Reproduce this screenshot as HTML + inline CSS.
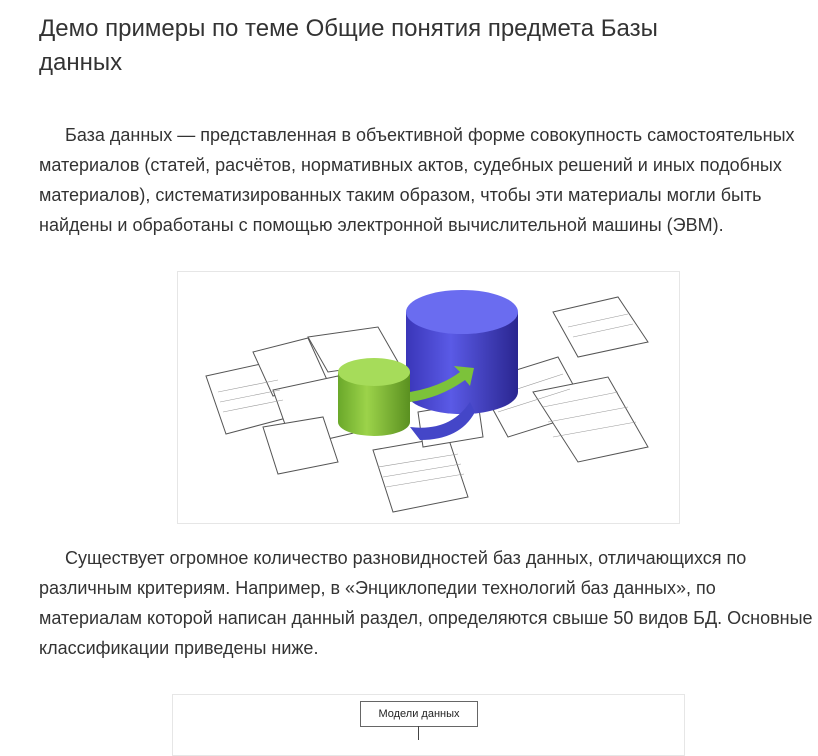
<!DOCTYPE html>
<html><head><meta charset="utf-8"><style>
body{margin:0;background:#fff;width:818px;height:740px;overflow:hidden;font-family:"Liberation Sans",Arial,sans-serif;color:#333;}
h1{position:absolute;left:39px;top:12px;margin:0;font-weight:normal;font-size:24px;line-height:34px;color:#333;white-space:nowrap;}
.p{position:absolute;left:39px;font-size:18px;line-height:30px;white-space:nowrap;color:#333;}
.i{padding-left:26px}
.box{position:absolute;border:1px solid #e6e6e6;background:#fff;}
</style></head><body>
<h1>Демо примеры по теме Общие понятия предмета Базы<br>данных</h1>
<div class="p" style="top:120px"><span class="i"></span>База данных — представленная в объективной форме совокупность самостоятельных<br>материалов (статей, расчётов, нормативных актов, судебных решений и иных подобных<br>материалов), систематизированных таким образом, чтобы эти материалы могли быть<br>найдены и обработаны с помощью электронной вычислительной машины (ЭВМ).</div>
<div class="box" style="left:177px;top:271px;width:501px;height:251px">
<svg width="501" height="251" viewBox="0 0 501 251">
<g fill="#fff" stroke="#555" stroke-width="1">
<polygon points="28,104 92,90 112,145 48,162"/>
<polygon points="75,80 130,66 150,110 95,124"/>
<polygon points="130,65 200,55 220,90 150,100"/>
<polygon points="95,118 160,104 180,160 115,175"/>
<polygon points="85,155 145,145 160,190 100,202"/>
<polygon points="195,178 270,165 290,225 215,240"/>
<polygon points="240,140 300,130 305,165 245,175"/>
<polygon points="300,110 380,85 410,140 330,165"/>
<polygon points="375,40 440,25 470,70 400,85"/>
<polygon points="355,120 430,105 470,175 400,190"/>
</g>
<g stroke="#999" stroke-width="0.6">
<line x1="40" y1="120" x2="100" y2="108"/><line x1="42" y1="130" x2="102" y2="118"/><line x1="45" y1="140" x2="105" y2="128"/>
<line x1="200" y1="195" x2="280" y2="182"/><line x1="205" y1="205" x2="283" y2="192"/><line x1="208" y1="215" x2="286" y2="202"/>
<line x1="365" y1="135" x2="440" y2="120"/><line x1="370" y1="150" x2="450" y2="135"/><line x1="375" y1="165" x2="458" y2="150"/>
<line x1="390" y1="55" x2="450" y2="42"/><line x1="395" y1="65" x2="455" y2="52"/>
<line x1="315" y1="125" x2="385" y2="102"/><line x1="320" y1="140" x2="392" y2="117"/>
</g>
<defs>
<linearGradient id="b" x1="0" x2="1"><stop offset="0" stop-color="#3a36b8"/><stop offset=".4" stop-color="#5a5ae6"/><stop offset="1" stop-color="#2a2690"/></linearGradient>
<linearGradient id="g" x1="0" x2="1"><stop offset="0" stop-color="#6aa82a"/><stop offset=".4" stop-color="#9cd34a"/><stop offset="1" stop-color="#5a9020"/></linearGradient>
</defs>
<path d="M228,40 v80 a56,22 0 0 0 112,0 v-80 z" fill="url(#b)"/>
<ellipse cx="284" cy="40" rx="56" ry="22" fill="#6a6cf0"/>
<path d="M160,100 v50 a36,14 0 0 0 72,0 v-50 z" fill="url(#g)"/>
<ellipse cx="196" cy="100" rx="36" ry="14" fill="#a6dc5a"/>
<path d="M232,120 q30,-5 50,-20 l-6,-6 l20,2 l-4,18 l-5,-6 q-25,18 -55,22z" fill="#7cc23a"/>
<path d="M232,155 q40,5 60,-25 l5,10 q-15,28 -55,28z" fill="#4446c8"/>
</svg></div>
<div class="p" style="top:543px"><span class="i"></span>Существует огромное количество разновидностей баз данных, отличающихся по<br>различным критериям. Например, в «Энциклопедии технологий баз данных», по<br>материалам которой написан данный раздел, определяются свыше 50 видов БД. Основные<br>классификации приведены ниже.</div>
<div class="box" style="left:172px;top:694px;width:511px;height:60px"></div>
<div style="position:absolute;left:360px;top:701px;width:116px;height:24px;border:1px solid #666;background:#fff;font-size:11px;line-height:24px;text-align:center;color:#222">Модели данных</div>
<div style="position:absolute;left:418px;top:726px;width:1px;height:14px;background:#444"></div>
</body></html>
